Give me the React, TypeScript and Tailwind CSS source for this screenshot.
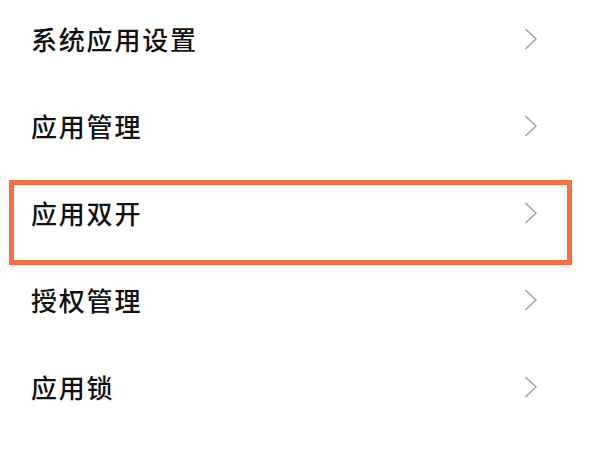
import React from "react";

const items = ["系统应用设置", "应用管理", "应用双开", "授权管理", "应用锁"];

function Chevron() {
  return (
    <svg width="14" height="22" viewBox="0 0 14 22" fill="none" className="shrink-0">
      <path d="M2 1.5 L12 11 L2 20.5" stroke="#a3a3a3" strokeWidth="1.6" strokeLinecap="round" strokeLinejoin="round" />
    </svg>
  );
}

export default function App() {
  return (
    <div
      className="w-[600px] h-[450px] bg-white overflow-hidden"
      style={{ fontFamily: '"Noto Sans CJK SC", "Noto Sans", sans-serif' }}
    >
      <div className="-mt-[5px] flex flex-col">
        {items.map((t, i) => (
          <div key={t} className="relative h-[87px] flex items-center pl-[31px] pr-[62px]">
            <span className="flex-1 text-[26px] font-medium text-[#111111] leading-none tracking-[1.8px]">{t}</span>
            <Chevron />
            {i === 2 && (
              <div className="pointer-events-none absolute left-[9px] right-[28px] top-[11px] h-[85px] border-[5px] border-[#f86e40]" />
            )}
          </div>
        ))}
      </div>
    </div>
  );
}
